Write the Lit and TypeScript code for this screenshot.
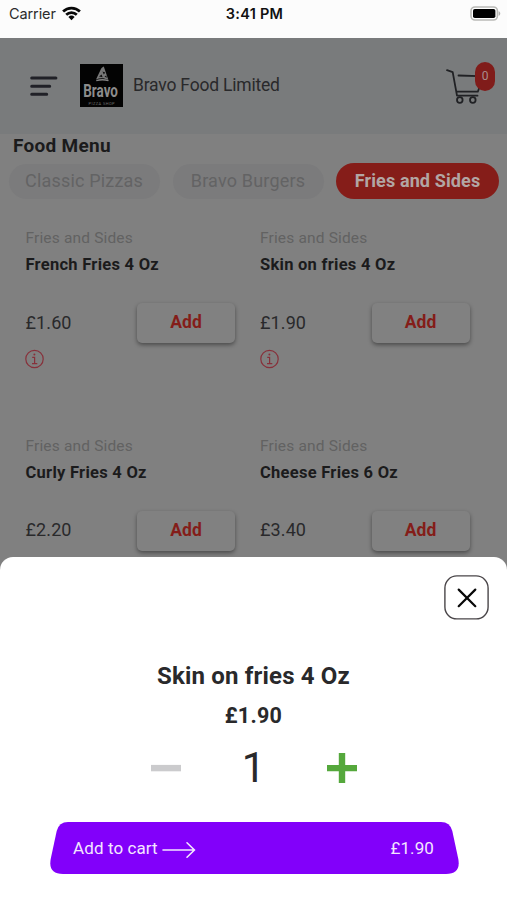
import { LitElement, html, css } from "lit";
import { customElement, property } from "lit/decorators.js";

@customElement("status-bar")
class StatusBar extends LitElement {
  static styles = css`
    :host {
      display: grid;
      grid-template-columns: 1fr auto 1fr;
      align-items: center;
      height: 38px;
      padding: 0 6px 10px 9px;
      box-sizing: border-box;
      background: #fcfcfc;
      color: #111;
      font: 15px/18px Inter, sans-serif;
    }
    .carrier { display: flex; align-items: center; gap: 6px; color: #2b2b2b; font-size: 14.5px; letter-spacing: -0.1px; }
    .time { margin-left: -1px; font-weight: 600; font-size: 14.5px; letter-spacing: 0.25px; }
    .battery { justify-self: end; margin-top: -2px; }
    svg { display: block; }
    .wifi { margin-top: -2px; }
  `;
  render() {
    return html`
      <div class="carrier">
        <span>Carrier</span>
        <svg class="wifi" width="19" height="15" viewBox="0 0 19 15" fill="none" stroke="#080808" stroke-width="2.7">
          <path d="M1.1 5.5a12 12 0 0 1 16.8 0" />
          <path d="M4.2 8.8a7.6 7.6 0 0 1 10.6 0" />
          <path d="M9.5 14.2 6.4 11a4.5 4.5 0 0 1 6.2 0z" fill="#080808" stroke="none" />
        </svg>
      </div>
      <div class="time">3:41 PM</div>
      <svg class="battery" width="31" height="15" viewBox="0 0 31 15">
        <rect x="1" y="1" width="26.4" height="13" rx="4" fill="#fff" stroke="#b9b9b6" stroke-width="1.6" />
        <rect x="3" y="3" width="22.4" height="9" rx="1.8" fill="#000" />
        <path d="M28.6 5.2c2.2.6 2.2 4 0 4.6z" fill="#b0b0ae" />
      </svg>
    `;
  }
}

@customElement("shop-header")
class ShopHeader extends LitElement {
  static styles = css`
    :host {
      display: flex;
      align-items: center;
      height: 96px;
      padding: 0 12px 0 30px;
      box-sizing: border-box;
      background: #797b7c;
      color: #29292b;
      font: 17.5px/24px Roboto, sans-serif;
    }
    svg { display: block; }
    .menu { margin-right: 22px; }
    .logo { margin: -1px 10px 0 0; }
    .name { flex: 1; margin-top: -2px; letter-spacing: -0.2px; }
    .cart { position: relative; width: 50px; height: 46px; margin-top: -2px; }
    .badge {
      position: absolute;
      right: 0;
      top: 0;
      width: 20px;
      height: 29px;
      border-radius: 10px;
      background: #801c1a;
      color: #a88d8c;
      font-size: 12px;
      line-height: 28px;
      text-align: center;
    }
    .word { font: bold 19px Roboto, sans-serif; }
    .sub { font: 4px Roboto, sans-serif; letter-spacing: 0.4px; }
  `;
  render() {
    return html`
      <svg class="menu" width="28" height="22" viewBox="0 0 28 22" stroke="#202127" stroke-width="3" stroke-linecap="round">
        <path d="M1.7 3h24.2M1.7 11.2h18M1.7 19.2h15" />
      </svg>
      <svg class="logo" width="43" height="43" viewBox="0 0 43 43">
        <rect width="43" height="43" fill="#030303" />
        <path d="M23.8 2.4c-2 1-2.8 2-3.2 3.4L16 15.4c4-1.7 8-1.7 12.3.4z" fill="#777" />
        <path d="M22.5 7.5l2.8 1-1.5 2zM19 12.6l2.6-2 1 2.6zM24.5 12.2l1.9-.8.3 2.5z" fill="#111" />
        <path d="M16.3 16.6q6-1.8 12.2 0" stroke="#858585" stroke-width="1.5" fill="none" />
        <g transform="translate(3.2 33)"><text class="word" transform="scale(0.71 1)" fill="#8c8c8c">Bravo</text></g>
        <text class="sub" x="8.5" y="41" fill="#707070">PIZZA SHOP</text>
      </svg>
      <div class="name">Bravo Food Limited</div>
      <div class="cart">
        <svg width="50" height="46" viewBox="0 0 50 46" fill="none" stroke="#202124" stroke-width="1.8" stroke-linecap="round" stroke-linejoin="round">
          <path d="M2 8.2l5.700 2 4.300 23.500h20.500M13.500 13.500l20 .7M11.300 29.700h21.500l3.300-9" />
          <circle cx="14.800" cy="38" r="2.800" />
          <circle cx="27.800" cy="38" r="2.800" />
        </svg>
        <span class="badge">0</span>
      </div>
    `;
  }
}

@customElement("menu-card")
class MenuCard extends LitElement {
  @property() name = "";
  @property() price = "";
  static styles = css`
    :host { display: block; height: 207.5px; font-family: Roboto, sans-serif; color: #29292b; }
    .category { font-size: 15.5px; line-height: 20px; letter-spacing: 0.16px; color: #626262; }
    .name { margin-top: 6px; font-size: 16.5px; line-height: 22px; font-weight: 700; letter-spacing: 0.27px; color: #1b1b1c; white-space: nowrap; }
    .row { display: flex; align-items: center; justify-content: space-between; margin-top: 27px; width: 209.5px; height: 40px; }
    .price { margin-top: -2px; font-size: 18px; letter-spacing: 0.1px; }
    .add {
      width: 98px;
      height: 40px;
      border-radius: 5px;
      background: #818181;
      box-shadow: 0 2px 4px rgba(0, 0, 0, 0.42);
      color: #841d19;
      font-size: 17.5px;
      font-weight: 700;
      line-height: 38px;
      text-align: center;
    }
    svg { display: block; margin: 6px 0 0 -0.5px; }
  `;
  render() {
    return html`
      <div class="category">Fries and Sides</div>
      <div class="name">${this.name}</div>
      <div class="row">
        <span class="price">${this.price}</span>
        <span class="add">Add</span>
      </div>
      <svg width="20" height="20" viewBox="0 0 20 20" fill="none" stroke="#87303a">
        <circle cx="9.5" cy="10" r="8.7" stroke-width="1.2" />
        <path d="M7.2 8.3h2.4v6.2M7 14.7h5.3" stroke-width="1.2" />
        <circle cx="9.4" cy="5.4" r="1" fill="#87303a" stroke="none" />
      </svg>
    `;
  }
}

@customElement("item-sheet")
class ItemSheet extends LitElement {
  static styles = css`
    :host {
      display: flex;
      flex-direction: column;
      align-items: center;
      box-sizing: border-box;
      padding: 17.5px 18px 0;
      background: #fff;
      border-radius: 13px 13px 0 0;
      color: #29292b;
      font-family: Roboto, sans-serif;
    }
    svg { display: block; }
    .close { align-self: flex-end; }
    .title { margin-top: 40.5px; font-size: 24px; line-height: 32px; font-weight: 700; letter-spacing: 0.17px; }
    .price { margin-top: 10px; font-size: 21.5px; line-height: 28px; font-weight: 700; letter-spacing: 0.3px; }
    .stepper { display: grid; grid-template-columns: 30px 146px 30px; align-items: center; height: 52px; margin-top: 12px; }
    .qty { margin-top: -1px; text-align: center; font-size: 42px; line-height: 52px; }
    .cta { position: relative; width: 409px; height: 52px; margin-top: 28px; left: 1px; }
    .shape { position: absolute; inset: 0; }
    .content {
      position: relative;
      display: flex;
      align-items: center;
      height: 52px;
      padding: 0 25px 0 23px;
      color: #f3e6ff;
      font-size: 17px;
      letter-spacing: 0.1px;
    }
    .arrow { margin: 4px auto 0 4px; }
  `;
  render() {
    return html`
      <svg class="close" width="45" height="45" viewBox="0 0 45 45" fill="none">
        <rect x="0.9" y="0.9" width="43.2" height="43" rx="12" stroke="#4a4649" stroke-width="1.4" />
        <path d="M14.7 14.6l16.600 16.600M31.300 14.600L14.700 31.200" stroke="#080808" stroke-width="2.200" stroke-linecap="round" />
      </svg>
      <div class="title">Skin on fries 4 Oz</div>
      <div class="price">£1.90</div>
      <div class="stepper">
        <svg width="30" height="30" viewBox="0 0 30 30"><rect y="11.900" width="30" height="6.400" fill="#cbcbcd" /></svg>
        <span class="qty">1</span>
        <svg width="30" height="30" viewBox="0 0 30 30"><path d="M11.800 0h6.400v11.900H30v6.400H18.200V30h-6.400V18.300H0v-6.400h11.800z" fill="#55a83c" /></svg>
      </div>
      <div class="cta">
        <svg class="shape" width="409" height="52" viewBox="0 0 409 52">
          <path d="M18 0H391Q400 0 402.300 9L408.300 37Q411 52 396 52H13Q-2 52 .7 37L6.700 9Q9 0 18 0z" fill="#8200fa" />
        </svg>
        <div class="content">
          <span>Add to cart</span>
          <svg class="arrow" width="34" height="18" viewBox="0 0 34 18" fill="none" stroke="#f3e6ff" stroke-width="1.600" stroke-linecap="round">
            <path d="M1 9h31M25 1.800L32.400 9 25 16.200" />
          </svg>
          <span>£1.90</span>
        </div>
      </div>
    `;
  }
}

@customElement("app-root")
class AppRoot extends LitElement {
  static styles = css`
    :host {
      display: block;
      position: relative;
      width: 507px;
      height: 900px;
      overflow: hidden;
      background: #808080;
      font-family: Roboto, sans-serif;
    }
    h1 { margin: 0 0 0 13px; padding-top: 1px; font-size: 19px; line-height: 22px; font-weight: 700; letter-spacing: 0.28px; color: #1b1b1c; }
    .tabs { display: flex; align-items: center; gap: 13px; margin-top: 6px; padding-left: 8.5px; height: 36px; }
    .tab {
      box-sizing: border-box;
      width: 151px;
      height: 35px;
      border-radius: 17.5px;
      background: #7b7b7c;
      color: #636364;
      font-size: 18px;
      line-height: 34px;
      letter-spacing: 0.18px;
      text-align: center;
      white-space: nowrap;
    }
    .tab.active { width: 163px; height: 36px; margin-left: -0.5px; border-radius: 18px; background: #851d19; color: #b2a6a4; font-weight: 700; line-height: 35px; letter-spacing: 0.13px; }
    .grid { display: grid; grid-template-columns: 234.5px 234.5px; margin-top: 29px; padding-left: 25.5px; }
    item-sheet { position: absolute; left: 0; right: 0; bottom: 0; height: 343px; }
  `;
  render() {
    const items = [
      ["French Fries 4 Oz", "£1.60"],
      ["Skin on fries 4 Oz", "£1.90"],
      ["Curly Fries 4 Oz", "£2.20"],
      ["Cheese Fries 6 Oz", "£3.40"],
    ];
    return html`
      <status-bar></status-bar>
      <shop-header></shop-header>
      <h1>Food Menu</h1>
      <div class="tabs">
        <div class="tab">Classic Pizzas</div>
        <div class="tab">Bravo Burgers</div>
        <div class="tab active">Fries and Sides</div>
      </div>
      <div class="grid">
        ${items.map(([name, price]) => html`<menu-card .name=${name} .price=${price}></menu-card>`)}
      </div>
      <item-sheet></item-sheet>
    `;
  }
}
